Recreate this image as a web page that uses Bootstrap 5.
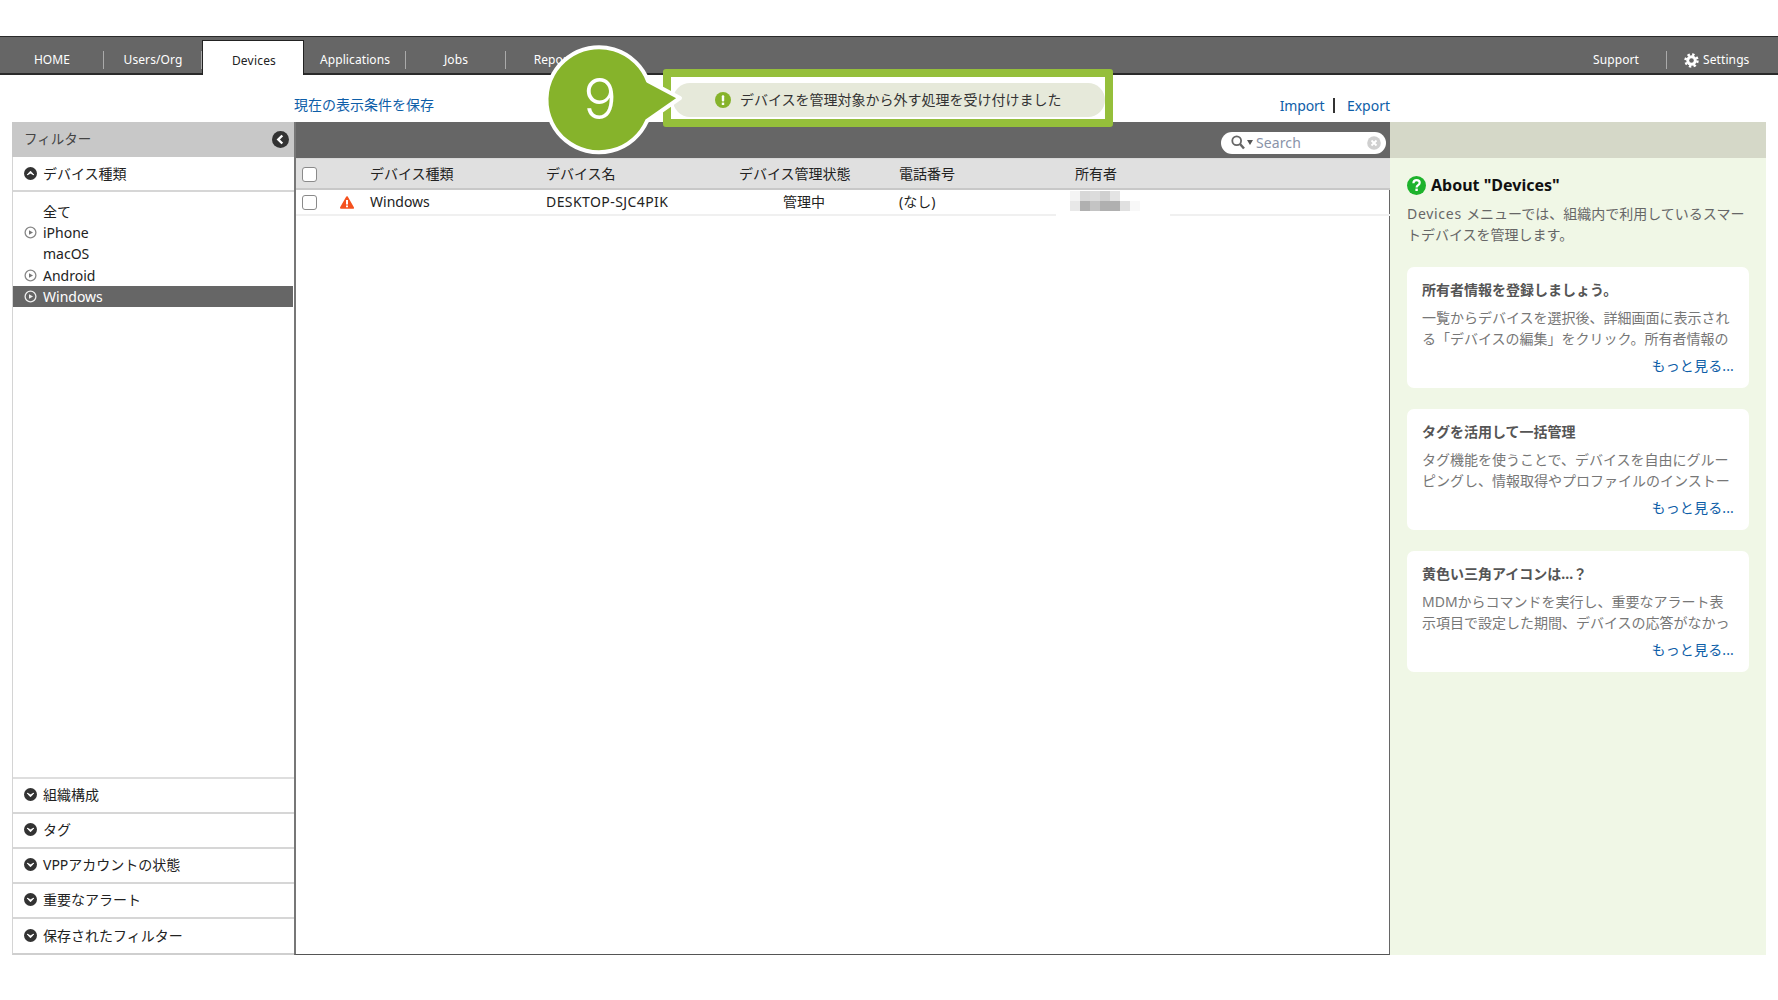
<!DOCTYPE html>
<html lang="ja">
<head>
<meta charset="utf-8">
<title>Devices</title>
<link href="https://cdn.jsdelivr.net/npm/bootstrap@5.3.0/dist/css/bootstrap.min.css" rel="stylesheet">
<style>
html,body{height:100%;}
body{margin:0;background:#fff;color:#222;font-family:"Noto Sans","Noto Sans CJK JP",sans-serif;font-size:14px;line-height:21px;overflow:hidden;}
.app-page{position:relative;width:1778px;height:1000px;padding-top:36px;}
a{text-decoration:none;color:#0e5ea8;}
.topbar{height:39px;background:#666;border-top:1px solid #2a2a2a;border-bottom:2px solid #2a2a2a;}
.topitem{height:36px;padding-top:10px;font-size:12px;line-height:26px;color:#fff;text-align:center;flex:none;position:relative;letter-spacing:.1px;}
.topitem.sep::after{content:"";position:absolute;right:0;top:14px;height:18px;width:1.5px;background:#aaa;}
.topitem.current{background:#fff;color:#222;margin-top:3px;padding-top:7px;padding-left:2px;border:1px solid #222;border-bottom:0;position:relative;height:35px;letter-spacing:.2px;}
.w-home{width:104px}.w-users{width:98px}.w-dev{width:102px}.w-apps{width:102px}.w-jobs{width:100px}.w-rep{width:100px}
.w-sup{width:111px;padding-left:9px;}.w-set{width:111px;text-align:left;}
.geartxt{display:flex;align-items:center;gap:4px;padding-left:17px;}
.subrow{height:47px;padding:20px 388px 0 294px;line-height:21px;font-size:14px;}
.savelink{margin-top:-1px;}
.vbar{display:inline-block;width:1.5px;height:15px;background:#333;margin:0 12px 0 9px;vertical-align:-2px;}
.importlink{letter-spacing:-.2px;}
.workarea{height:833px;margin:0 12px;}
.sidecol{width:282px;flex:none;border-left:1px solid #d4d4d4;border-bottom:2px solid #cfcfcf;}
.sidehead{height:35px;background:#c8c8c8;padding:0 5px 0 12px;color:#444;font-size:13.5px;margin-left:-1px;}
.sec{height:35px;border-bottom:2px solid #d6d6d6;padding-left:11px;gap:6px;flex:none;}
.sec-lower{padding-bottom:2px;}
.sec-last{border-bottom:0;height:34px;}
.ico12{width:13px;height:13px;flex:none;}
.typelist{padding-top:9px;border-bottom:2px solid #dedede;}
.typerow{height:21.2px;line-height:21.2px;padding-left:11px;gap:6px;color:#222;margin-right:1px;}
.typerow.picked{background:#666;color:#fff;}
.listcol{width:1096px;flex:none;border-left:2px solid #777;border-right:1px solid #666;border-bottom:1px solid #555;}
.listbar{height:36px;background:#666;position:relative;}
.finder{width:165px;height:22px;margin:5px 3px 0 0;background:#fff;border-radius:11px;padding:0 5px 0 10px;color:#8a93a8;font-size:14px;line-height:22px;gap:2px;}
.finder-word{padding-left:1px;letter-spacing:.1px;}
.devtable{table-layout:fixed;width:1094px;border-collapse:collapse;--bs-table-bg:transparent;margin:0;}
.devtable th,.devtable td{padding:0;font-weight:400;border:0;vertical-align:middle;color:#222;box-shadow:none;background:transparent;white-space:nowrap;font-size:14px;}
.devtable thead tr{background:#e0e0e0;height:30px;border-top:1px solid #d8d8d8;border-bottom:2px solid #c8c8c8;}
.devtable tbody tr{height:26px;border-bottom:2px solid #f0f0f0;}
.devtable .form-check-input{width:15px;height:15px;margin:4px 0 0 6px;border:1.5px solid #8a8a8a;border-radius:3px;}
.namecell{letter-spacing:.42px;}
.statecell{padding-left:44px !important;}
.blurcell{position:relative;}
.blurbox{position:absolute;left:-19px;top:1px;width:114px;}
.alertmark{margin:-2px 0 0 15px;}
.helpcol{width:376px;flex:none;background:#f0f7e6;}
.helphead{height:36px;background:#d5d8c8;}
.helpbody{padding:15px 17px 0 17px;}
.helptitle{font-size:16px;font-weight:700;line-height:24px;color:#111;gap:5px;}
.helpintro{color:#666;line-height:21.4px;margin:6px 0 21px;width:342px;}
.introword{letter-spacing:.7px;}
.tipbox{background:#fff;border-radius:7px;height:121px;padding:12.5px 15px 0 15px;margin-bottom:21px;color:#777;}
.tiphead{font-weight:700;color:#555;line-height:21px;}
.tiptext{height:42px;margin-top:6.5px;line-height:21px;width:312px;}
.tipmore{text-align:right;margin-top:6px;line-height:21px;letter-spacing:.15px;}
.callframe{position:absolute;left:663px;top:69px;width:450px;height:58px;border:8px solid #95bf3b;border-radius:3px;background:#fff;padding:6px 0 0 2px;box-sizing:border-box;}
.callpill{height:34px;background:#e6e9da;border-radius:17px;padding-left:42px;gap:9px;color:#333;line-height:34px;}
.stepmark{position:absolute;left:540px;top:36px;}
</style>
</head>
<body>
<div class="app-page">
  <nav class="topbar d-flex">
    <div class="topitem sep w-home">HOME</div>
    <div class="topitem sep w-users">Users/Org</div>
    <div class="topitem current w-dev">Devices</div>
    <div class="topitem sep w-apps">Applications</div>
    <div class="topitem sep w-jobs">Jobs</div>
    <div class="topitem w-rep">Reports</div>
    <div class="topitem sep w-sup ms-auto">Support</div>
    <div class="topitem w-set"><span class="geartxt">
      <svg width="15" height="15" viewBox="0 0 15 15"><circle cx="7.5" cy="7.5" r="5.2" fill="#fff"/><circle cx="7.5" cy="7.5" r="6" fill="none" stroke="#fff" stroke-width="2.4" stroke-dasharray="2.4 2.3"/><circle cx="7.5" cy="7.5" r="2.3" fill="#666"/></svg>
      Settings</span></div>
  </nav>

  <div class="subrow d-flex justify-content-between">
    <a class="savelink" href="#">現在の表示条件を保存</a>
    <span><a class="importlink" href="#">Import</a><span class="vbar"></span><a href="#">Export</a></span>
  </div>

  <div class="workarea d-flex">
    <aside class="sidecol d-flex flex-column">
      <div class="sidehead d-flex align-items-center justify-content-between">
        <span>フィルター</span>
        <svg width="17" height="17" viewBox="0 0 17 17"><circle cx="8.5" cy="8.5" r="8.5" fill="#333"/><path d="M10.3 4.5 6.3 8.5l4 4" fill="none" stroke="#fff" stroke-width="2.4"/></svg>
      </div>
      <div class="sec d-flex align-items-center">
        <svg class="ico12" viewBox="0 0 13 13"><circle cx="6.5" cy="6.5" r="6.5" fill="#333"/><path d="M3.2 7.8 6.5 4.2 9.8 7.8 6.5 6.2z" fill="#fff" stroke="#fff" stroke-width="1"/></svg>
        <span>デバイス種類</span>
      </div>
      <div class="typelist flex-grow-1">
        <div class="typerow d-flex align-items-center"><span class="ico12"></span><span>全て</span></div>
        <div class="typerow d-flex align-items-center"><svg class="ico12" viewBox="0 0 13 13"><circle cx="6.5" cy="6.5" r="5.4" fill="none" stroke="#888" stroke-width="1.3"/><path d="M5 4.2 9 6.5 5 8.8z" fill="#777"/></svg><span>iPhone</span></div>
        <div class="typerow d-flex align-items-center"><span class="ico12"></span><span>macOS</span></div>
        <div class="typerow d-flex align-items-center"><svg class="ico12" viewBox="0 0 13 13"><circle cx="6.5" cy="6.5" r="5.4" fill="none" stroke="#888" stroke-width="1.3"/><path d="M5 4.2 9 6.5 5 8.8z" fill="#777"/></svg><span>Android</span></div>
        <div class="typerow picked d-flex align-items-center"><svg class="ico12" viewBox="0 0 13 13"><circle cx="6.5" cy="6.5" r="5.4" fill="none" stroke="#eee" stroke-width="1.3"/><path d="M5 4.2 9 6.5 5 8.8z" fill="#eee"/></svg><span>Windows</span></div>
      </div>
      <div class="sec sec-lower d-flex align-items-center"><svg class="ico12" viewBox="0 0 13 13"><circle cx="6.5" cy="6.5" r="6.5" fill="#333"/><path d="M3.2 5.2 6.5 8.8 9.8 5.2 6.5 6.8z" fill="#fff" stroke="#fff" stroke-width="1"/></svg><span>組織構成</span></div>
      <div class="sec sec-lower d-flex align-items-center"><svg class="ico12" viewBox="0 0 13 13"><circle cx="6.5" cy="6.5" r="6.5" fill="#333"/><path d="M3.2 5.2 6.5 8.8 9.8 5.2 6.5 6.8z" fill="#fff" stroke="#fff" stroke-width="1"/></svg><span>タグ</span></div>
      <div class="sec sec-lower d-flex align-items-center"><svg class="ico12" viewBox="0 0 13 13"><circle cx="6.5" cy="6.5" r="6.5" fill="#333"/><path d="M3.2 5.2 6.5 8.8 9.8 5.2 6.5 6.8z" fill="#fff" stroke="#fff" stroke-width="1"/></svg><span>VPPアカウントの状態</span></div>
      <div class="sec sec-lower d-flex align-items-center"><svg class="ico12" viewBox="0 0 13 13"><circle cx="6.5" cy="6.5" r="6.5" fill="#333"/><path d="M3.2 5.2 6.5 8.8 9.8 5.2 6.5 6.8z" fill="#fff" stroke="#fff" stroke-width="1"/></svg><span>重要なアラート</span></div>
      <div class="sec sec-last sec-lower d-flex align-items-center"><svg class="ico12" viewBox="0 0 13 13"><circle cx="6.5" cy="6.5" r="6.5" fill="#333"/><path d="M3.2 5.2 6.5 8.8 9.8 5.2 6.5 6.8z" fill="#fff" stroke="#fff" stroke-width="1"/></svg><span>保存されたフィルター</span></div>
    </aside>

    <section class="listcol">
      <div class="listbar d-flex align-items-center justify-content-end">
        <div class="finder d-flex align-items-center">
          <svg width="14" height="15" viewBox="0 0 14 15"><circle cx="5.7" cy="5.7" r="4.4" fill="none" stroke="#666" stroke-width="1.8"/><path d="M9 9 13 13.5" stroke="#666" stroke-width="2.5"/></svg>
          <svg width="6" height="5" viewBox="0 0 6 5"><path d="M0 0h6L3 5z" fill="#555"/></svg>
          <span class="flex-grow-1 finder-word">Search</span>
          <svg width="14" height="14" viewBox="0 0 14 14"><circle cx="7" cy="7" r="6.8" fill="#cfcfcf"/><path d="M4.5 4.5l5 5m0-5-5 5" stroke="#fff" stroke-width="1.8"/></svg>
        </div>
      </div>
      <table class="table devtable">
        <colgroup><col style="width:29px"><col style="width:45px"><col style="width:176px"><col style="width:193px"><col style="width:160px"><col style="width:176px"><col></colgroup>
        <thead>
          <tr><th><input class="form-check-input" type="checkbox" aria-label="all"></th><th></th><th>デバイス種類</th><th>デバイス名</th><th>デバイス管理状態</th><th>電話番号</th><th>所有者</th></tr>
        </thead>
        <tbody>
          <tr>
            <td><input class="form-check-input" type="checkbox" aria-label="row"></td>
            <td><svg class="alertmark" width="14" height="13" viewBox="0 0 14 13"><path d="M7 1.2 13 11.8H1z" fill="#f4511e" stroke="#f4511e" stroke-width="2" stroke-linejoin="round"/><path d="M7 4v4.4" stroke="#fff" stroke-width="2"/><path d="M7 9.4v1.8" stroke="#fff" stroke-width="2"/></svg></td>
            <td>Windows</td><td class="namecell">DESKTOP-SJC4PIK</td><td class="statecell">管理中</td><td>(なし)</td>
            <td class="blurcell">
              <svg class="blurbox" width="114" height="28" viewBox="0 0 114 28">
                <rect x="0" y="21" width="114" height="7" fill="#fff"/>
                <rect x="14" y="0" width="10" height="10" fill="#f4f4f4"/><rect x="24" y="0" width="10" height="10" fill="#d8d8d8"/><rect x="34" y="0" width="10" height="10" fill="#dcdcdc"/><rect x="44" y="0" width="10" height="10" fill="#d0d0d0"/><rect x="54" y="0" width="10" height="10" fill="#e4e4e4"/>
                <rect x="14" y="10" width="10" height="10" fill="#e8e8e8"/><rect x="24" y="10" width="10" height="10" fill="#b0b0b0"/><rect x="34" y="10" width="10" height="10" fill="#c4c4c4"/><rect x="44" y="10" width="20" height="10" fill="#b0b0b0"/><rect x="64" y="10" width="10" height="10" fill="#e0e0e0"/><rect x="74" y="10" width="10" height="10" fill="#f8f8f8"/>
              </svg>
            </td>
          </tr>
        </tbody>
      </table>
    </section>

    <aside class="helpcol">
      <div class="helphead"></div>
      <div class="helpbody">
        <div class="helptitle d-flex align-items-center">
          <svg width="19" height="19" viewBox="0 0 19 19"><circle cx="9.5" cy="9.5" r="9.5" fill="#1db32c"/><path d="M6.4 7.2c.1-2 1.5-3 3.2-3 1.8 0 3.1 1 3.1 2.6 0 2.3-3.1 2.3-3.1 4.7" fill="none" stroke="#fff" stroke-width="2.2"/><rect x="8.4" y="12.6" width="2.4" height="2.4" fill="#fff"/></svg>
          <span>About "Devices"</span>
        </div>
        <p class="helpintro"><span class="introword">Devices </span>メニューでは、組織内で利用しているスマートデバイスを管理します。</p>
        <div class="tipbox">
          <div class="tiphead">所有者情報を登録しましょう。</div>
          <div class="tiptext">一覧からデバイスを選択後、詳細画面に表示される「デバイスの編集」をクリック。所有者情報の</div>
          <div class="tipmore"><a href="#">もっと見る...</a></div>
        </div>
        <div class="tipbox">
          <div class="tiphead">タグを活用して一括管理</div>
          <div class="tiptext">タグ機能を使うことで、デバイスを自由にグルーピングし、情報取得やプロファイルのインストー</div>
          <div class="tipmore"><a href="#">もっと見る...</a></div>
        </div>
        <div class="tipbox">
          <div class="tiphead">黄色い三角アイコンは...？</div>
          <div class="tiptext">MDMからコマンドを実行し、重要なアラート表示項目で設定した期間、デバイスの応答がなかっ</div>
          <div class="tipmore"><a href="#">もっと見る...</a></div>
        </div>
      </div>
    </aside>
  </div>

  <div class="callframe">
    <div class="callpill d-flex align-items-center">
      <svg width="16" height="16" viewBox="0 0 16 16"><circle cx="8" cy="8" r="8" fill="#86b32b"/><rect x="6.8" y="3.2" width="2.4" height="6.4" rx="1" fill="#fff"/><rect x="6.8" y="10.6" width="2.4" height="2.4" fill="#fff"/></svg>
      <span>デバイスを管理対象から外す処理を受け付けました</span>
    </div>
  </div>
  <svg class="stepmark" width="145" height="125" viewBox="0 0 145 125">
    <path d="M108 45 140 62 107 85A52.5 52.5 0 1 1 108 45Z" fill="#86b32b" stroke="#fff" stroke-width="4" stroke-linejoin="round"/>
    <text x="60" y="83" text-anchor="middle" font-family="Inter,sans-serif" font-weight="300" font-size="56" fill="#fff">9</text>
  </svg>
</div>
<script src="https://cdn.jsdelivr.net/npm/bootstrap@5.3.0/dist/js/bootstrap.bundle.min.js"></script>
</body>
</html>
